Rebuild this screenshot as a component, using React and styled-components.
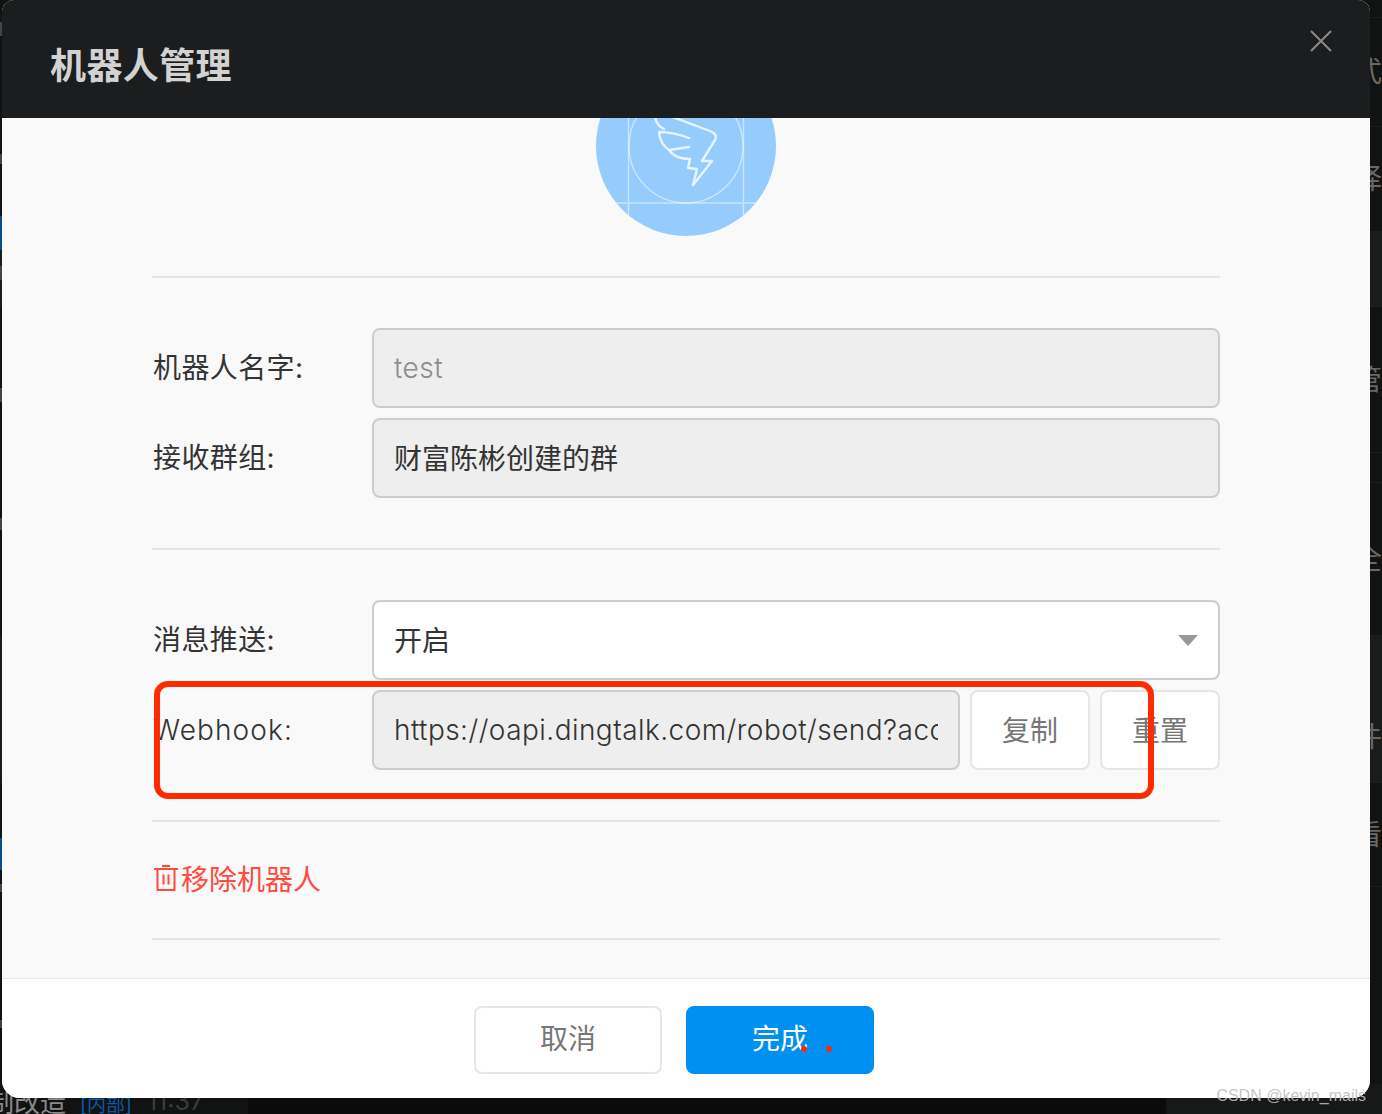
import React from "react";
import styled, { createGlobalStyle } from "styled-components";

const FONT = `Inter, "Noto Sans CJK SC", sans-serif`;

const GlobalStyle = createGlobalStyle`
  html, body {
    margin: 0;
    padding: 0;
    background: #111212;
  }
  * {
    box-sizing: border-box;
  }
`;

const sideRows = [
  { height: 18 },
  { height: 109, glyph: "式" },
  { height: 105, glyph: "择" },
  { height: 75, light: true },
  { height: 146, glyph: "管" },
  { height: 30 },
  { height: 153, glyph: "全" },
  { height: 147, glyph: "件", light: true, top: 56 },
  { height: 104, glyph: "看" },
];

// bits of the list behind the dialog that show at the left edge
const railMarks = [
  { gap: 22, height: 14, color: "#444" },
  { gap: 118, height: 10, color: "#444" },
  { gap: 52, height: 34, color: "#0a4a8a" },
  { gap: 16, height: 14, color: "#444" },
  { gap: 108, height: 14, color: "#444" },
  { gap: 116, height: 12, color: "#444" },
  { gap: 308, height: 32, color: "#0a4a8a" },
  { gap: 14, height: 8, color: "#444" },
  { gap: 128, height: 8, color: "#444" },
];

const Wing = () => (
  <AvatarSvg viewBox="0 0 180 180">
    <g fill="none" stroke="#fff" strokeOpacity="0.5" strokeWidth="1.4">
      <circle cx="90" cy="90" r="57" />
      <path d="M32.5 0V180M147.5 0V180M8 147H172" />
    </g>
    <g fill="none" stroke="#e8f4ff" strokeWidth="2.4" strokeLinecap="round" strokeLinejoin="round">
      <path d="M59 58Q59 69 68 73" />
      <path d="M74 60L114 75Q122 78 119 84L106 105H116L97 129L101 113L92 112L94 103Q79 103 73 94L93 91" />
      <path d="M93 82Q77 76 63 76Q64 88 73 94" />
    </g>
  </AvatarSvg>
);

const TrashIcon = () => (
  <IconSvg viewBox="0 0 24 26">
    <g fill="none" stroke="#ff4a3d" strokeWidth="2">
      <path d="M8 1H16M0 4H24M3.500 4V25H20.500V4" />
      <path d="M9.500 9.500V19.500M14.500 9.500V19.500" />
    </g>
  </IconSvg>
);

const App = () => (
  <Page>
    <GlobalStyle />
    <SideColumn>
      {sideRows.map((row, i) => (
        <SideRow key={i} $height={row.height} $light={row.light} $top={row.top}>
          {row.glyph}
        </SideRow>
      ))}
    </SideColumn>
    <LeftRail>
      {railMarks.map((mark, i) => (
        <RailMark key={i} $gap={mark.gap} $height={mark.height} $color={mark.color} />
      ))}
    </LeftRail>
    <BottomStrip>
      <ListTitle>制改造</ListTitle>
      <ListTag>[内部]</ListTag>
      <ListTime>11:37</ListTime>
    </BottomStrip>

    <Modal>
      <Header>
        <Title>机器人管理</Title>
        <CloseButton viewBox="0 0 22 22">
          <path d="M1 1L21 21M21 1L1 21" stroke="#8b8b8c" strokeWidth="2" fill="none" />
        </CloseButton>
      </Header>
      <Body>
        <Avatar>
          <Wing />
        </Avatar>
        <Divider $top={40} />
        <Section>
          <FieldRow>
            <Label>机器人名字:</Label>
            <TextInput $latin $muted readOnly value="test" />
          </FieldRow>
          <FieldRow>
            <Label>接收群组:</Label>
            <TextInput readOnly value="财富陈彬创建的群" />
          </FieldRow>
        </Section>
        <Divider />
        <Section>
          <FieldRow>
            <Label>消息推送:</Label>
            <SelectBox>
              开启
              <Caret />
            </SelectBox>
          </FieldRow>
          <FieldRow>
            <Label $latin>Webhook:</Label>
            <TextInput $latin readOnly value="https://oapi.dingtalk.com/robot/send?access_token=" />
            <SmallButton>复制</SmallButton>
            <SmallButton>重置</SmallButton>
          </FieldRow>
        </Section>
        <Divider />
        <RemoveRow>
          <TrashIcon />
          移除机器人
        </RemoveRow>
        <Divider />
      </Body>
      <Footer>
        <FooterButton>取消</FooterButton>
        <FooterButton $primary>完成</FooterButton>
      </Footer>
    </Modal>

    <RedBox />
    <RedDot $left={801} />
    <RedDot $left={826} />
    <Watermark>CSDN @kevin_mails</Watermark>
  </Page>
);

export default App;

const Page = styled.div`
  position: relative;
  width: 1382px;
  height: 1114px;
  overflow: hidden;
  font-family: ${FONT};
  background: #111212;
`;

const SideColumn = styled.div`
  display: flex;
  flex-direction: column;
`;

const SideRow = styled.div`
  height: ${(p) => p.$height}px;
  padding-top: ${(p) => p.$top || 0}px;
  display: flex;
  align-items: center;
  justify-content: flex-end;
  background: ${(p) => (p.$light ? "#1a1b1b" : "#111212")};
  border-bottom: 1px solid #1c1d1d;
  color: #686868;
  font-size: 28px;
  line-height: 1;
`;

const LeftRail = styled.div`
  position: absolute;
  left: 0;
  top: 0;
  width: 2px;
  display: flex;
  flex-direction: column;
`;

const RailMark = styled.span`
  height: ${(p) => p.$height}px;
  margin-top: ${(p) => p.$gap}px;
  background: ${(p) => p.$color};
`;

const BottomStrip = styled.div`
  position: absolute;
  left: 0;
  right: 0;
  bottom: 0;
  height: 30px;
  display: flex;
  align-items: flex-end;
  background: linear-gradient(90deg, #111212 248px, #0b0b0b 248px, #0b0b0b 1166px, #171918 1166px);
  line-height: 1;
  white-space: nowrap;
`;

const ListTitle = styled.span`
  margin-left: -12px;
  margin-bottom: -2px;
  color: #8a8a8a;
  font-size: 26px;
`;

const ListTag = styled.span`
  margin-left: 14px;
  margin-bottom: -1px;
  color: #0b5aa8;
  font-size: 19px;
`;

const ListTime = styled.span`
  margin-left: 15px;
  color: #3c3c3c;
  font-size: 25px;
`;

const Modal = styled.div`
  position: absolute;
  left: 2px;
  top: 0;
  width: 1368px;
  height: 1098px;
  display: flex;
  flex-direction: column;
  overflow: hidden;
  border-radius: 12px 12px 18px 18px;
  background: #fff;
`;

const Header = styled.div`
  flex: 0 0 118px;
  position: relative;
  z-index: 1;
  display: flex;
  align-items: center;
  justify-content: space-between;
  padding: 0 38px 0 48px;
  background: #1c1d1f;
`;

const Title = styled.h1`
  margin: 14px 0 0;
  color: #d2d2d2;
  font-size: 36px;
  font-weight: 700;
  letter-spacing: 0.4px;
  line-height: 1;
`;

const CloseButton = styled.svg`
  width: 22px;
  height: 22px;
  margin-bottom: 36px;
`;

const Body = styled.div`
  flex: 1;
  padding: 0 150px;
  background: #f9f9f9;
  border-bottom: 1px solid #e6e6e6;
  overflow: hidden;
`;

const Avatar = styled.div`
  width: 180px;
  height: 180px;
  margin: -62px auto 0;
  border-radius: 50%;
  background: #95ccfd;
  overflow: hidden;
`;

const AvatarSvg = styled.svg`
  display: block;
  width: 180px;
  height: 180px;
`;

const Divider = styled.div`
  height: 2px;
  margin-top: ${(p) => p.$top || 0}px;
  background: #e6e6e6;
`;

const Section = styled.div`
  display: flex;
  flex-direction: column;
  gap: 10px;
  padding: 50px 0;
`;

const FieldRow = styled.div`
  display: flex;
  align-items: center;
  gap: 10px;
  height: 80px;
`;

const Label = styled.label`
  flex: 0 0 210px;
  padding: 0 0 ${(p) => (p.$latin ? 0 : 4)}px 1px;
  color: #333;
  font-size: 28px;
  font-weight: ${(p) => (p.$latin ? 300 : 400)};
  letter-spacing: ${(p) => (p.$latin ? "1.1px" : "0.4px")};
  white-space: nowrap;
`;

const TextInput = styled.input`
  flex: 1;
  min-width: 0;
  height: 80px;
  padding: 0 20px ${(p) => (p.$latin ? 0 : 2)}px;
  border: 2px solid #ccc;
  border-radius: 8px;
  outline: none;
  background: #eee;
  color: ${(p) => (p.$muted ? "#8c8c8c" : "#333")};
  font-family: ${FONT};
  font-size: 28px;
  font-weight: ${(p) => (p.$latin ? 300 : 400)};
  letter-spacing: ${(p) => (p.$latin ? "0.45px" : 0)};
`;

const SelectBox = styled.div`
  flex: 1;
  height: 80px;
  padding: 0 20px 2px;
  display: flex;
  align-items: center;
  justify-content: space-between;
  border: 2px solid #ccc;
  border-radius: 8px;
  background: #fff;
  color: #333;
  font-size: 28px;
`;

const Caret = styled.span`
  width: 0;
  height: 0;
  margin-top: 2px;
  border-left: 10px solid transparent;
  border-right: 10px solid transparent;
  border-top: 11px solid #999;
`;

const SmallButton = styled.button`
  flex: 0 0 120px;
  height: 80px;
  padding: 0 0 2px;
  border: 2px solid #e6e6e6;
  border-radius: 8px;
  background: #fff;
  color: #777;
  font-family: ${FONT};
  font-size: 28px;
`;

const RemoveRow = styled.div`
  height: 116px;
  padding: 0 0 4px 2px;
  display: flex;
  align-items: center;
  gap: 3px;
  color: #ff4a3d;
  font-size: 28px;
`;

const IconSvg = styled.svg`
  width: 24px;
  height: 26px;
`;

const Footer = styled.div`
  flex: 0 0 119px;
  display: flex;
  justify-content: center;
  align-items: flex-start;
  gap: 24px;
  padding: 27px 24px 0 0;
  background: #fff;
`;

const FooterButton = styled.button`
  width: 188px;
  height: 68px;
  padding: 0 0 6px;
  border: 2px solid ${(p) => (p.$primary ? "#0090f2" : "#e6e6e6")};
  border-radius: 8px;
  background: ${(p) => (p.$primary ? "#0090f2" : "#fff")};
  color: ${(p) => (p.$primary ? "#fff" : "#777")};
  font-family: ${FONT};
  font-size: 28px;
`;

const RedBox = styled.div`
  position: absolute;
  left: 154px;
  top: 681px;
  width: 1000px;
  height: 118px;
  border: 6px solid #ff2a00;
  border-radius: 14px;
`;

const RedDot = styled.span`
  position: absolute;
  left: ${(p) => p.$left}px;
  top: 1046px;
  width: 6px;
  height: 6px;
  border-radius: 50%;
  background: #ff2a00;
`;

const Watermark = styled.span`
  position: absolute;
  right: 16px;
  bottom: 8px;
  color: rgba(190, 190, 190, 0.9);
  font-family: "Liberation Sans", sans-serif;
  font-size: 16px;
  line-height: 20px;
`;
